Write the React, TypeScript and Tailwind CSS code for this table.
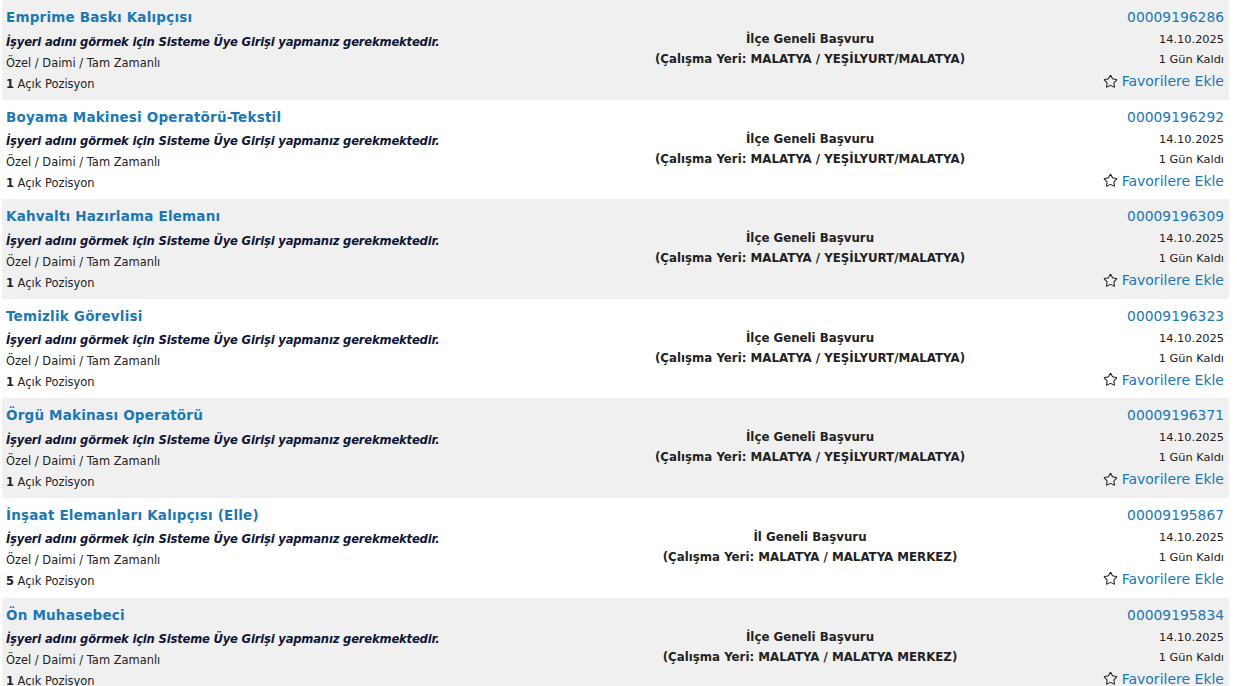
import { Star } from "lucide-react";

const jobs = [
  { title: "Emprime Baskı Kalıpçısı", scope: "İlçe Geneli Başvuru", place: "MALATYA / YEŞİLYURT/MALATYA", id: "00009196286", count: 1 },
  { title: "Boyama Makinesi Operatörü-Tekstil", scope: "İlçe Geneli Başvuru", place: "MALATYA / YEŞİLYURT/MALATYA", id: "00009196292", count: 1 },
  { title: "Kahvaltı Hazırlama Elemanı", scope: "İlçe Geneli Başvuru", place: "MALATYA / YEŞİLYURT/MALATYA", id: "00009196309", count: 1 },
  { title: "Temizlik Görevlisi", scope: "İlçe Geneli Başvuru", place: "MALATYA / YEŞİLYURT/MALATYA", id: "00009196323", count: 1 },
  { title: "Örgü Makinası Operatörü", scope: "İlçe Geneli Başvuru", place: "MALATYA / YEŞİLYURT/MALATYA", id: "00009196371", count: 1 },
  { title: "İnşaat Elemanları Kalıpçısı (Elle)", scope: "İl Geneli Başvuru", place: "MALATYA / MALATYA MERKEZ", id: "00009195867", count: 5 },
  { title: "Ön Muhasebeci", scope: "İlçe Geneli Başvuru", place: "MALATYA / MALATYA MERKEZ", id: "00009195834", count: 1 },
];

export default function App() {
  return (
    <div className="w-[1237px] h-[686px] overflow-hidden bg-white" style={{ fontFamily: '"DejaVu Sans", Verdana, sans-serif' }}>
      <div className="ml-[2px] w-[1227px]">
        {jobs.map((j, i) => (
          <div key={j.id} className={`h-[99.6px] flex ${i % 2 === 0 ? "bg-[#f0f0f0]" : "bg-white"}`}>
            {/* left */}
            <div className="w-[620px] pl-[4px] pt-[5px]">
              <div className="text-[13.5px] leading-[24px] font-bold text-[#1b78b5] tracking-[0.2px]">{j.title}</div>
              <div className="mt-[2.5px] text-[11.6px] leading-[21px] font-bold italic tracking-[-0.2px] text-[#0e1536]">
                İşyeri adını görmek için Sisteme Üye Girişi yapmanız gerekmektedir.
              </div>
              <div className="text-[11.45px] leading-[21px] text-[#222]">Özel / Daimi / Tam Zamanlı</div>
              <div className="text-[11.45px] leading-[21px] text-[#222]">
                <span className="font-bold">{j.count}</span> Açık Pozisyon
              </div>
            </div>
            {/* middle */}
            <div className="w-[376px] pt-[29px] text-center text-[11.8px] leading-[20px] font-bold text-[#222]">
              <div>{j.scope}</div>
              <div>(Çalışma Yeri: {j.place})</div>
            </div>
            {/* right */}
            <div className="flex-1 pr-[5px] pt-[5px] flex flex-col items-end">
              <div className="text-[13.85px] leading-[24px] text-[#1b78b5]">{j.id}</div>
              <div className="text-[11.35px] leading-[20px] text-[#222]">14.10.2025</div>
              <div className="text-[11.35px] leading-[20px] text-[#222]">1 Gün Kaldı</div>
              <div className="flex items-center gap-[4px] text-[14px] leading-[24px] text-[#1b78b5]">
                <Star size={15} strokeWidth={1.7} className="text-[#222]" />
                Favorilere Ekle
              </div>
            </div>
          </div>
        ))}
      </div>
    </div>
  );
}
